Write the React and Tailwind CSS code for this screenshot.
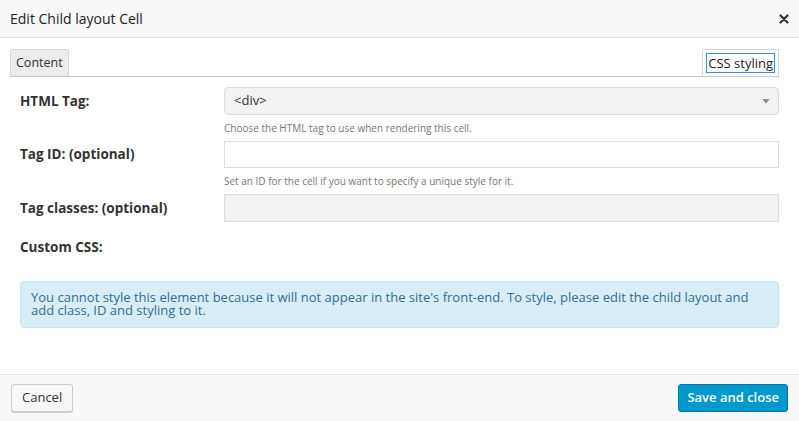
import React from "react";

function Row({ label, children }) {
  return (
    <div className="flex">
      <div className="w-[214px] shrink-0 pl-[10px] flex items-center text-[13.5px] font-bold text-[#333]">
        {label}
      </div>
      <div className="flex-1">{children}</div>
    </div>
  );
}

export default function App() {
  return (
    <div className="w-[799px] h-[421px] bg-white flex flex-col font-['Open_Sans',sans-serif] text-[#333] overflow-hidden">
      {/* dialog title bar */}
      <div className="h-[38px] shrink-0 bg-[#f8f8f8] border-b border-[#e5e5e5] flex items-center justify-between pl-[10px] pr-[10px]">
        <span className="text-[14px] text-[#222]">Edit Child layout Cell</span>
        <svg width="10" height="10" viewBox="0 0 10 10" className="mt-[1px]">
          <path d="M1.5 1.5 L8.5 8.5 M8.5 1.5 L1.5 8.5" stroke="#333" strokeWidth="2.2" strokeLinecap="round" />
        </svg>
      </div>

      <div className="flex-1 px-[10px] pt-[11px]">
        {/* tabs */}
        <div className="flex justify-between border-b border-[#c8c8c8] h-[28px] mr-[10px]">
          <div className="h-[27px] px-[5px] bg-[#ececec] border border-b-0 border-[#d6d6d6] rounded-t-[2px] text-[12.5px] flex items-center">
            Content
          </div>
          <div className="h-[27px] px-[3px] bg-white border border-b-0 border-[#d6d6d6] rounded-t-[2px] flex items-center">
            <span className="text-[13px] leading-[18px] px-[1px] border border-[#3b8fd6] text-[#222]">CSS styling</span>
          </div>
        </div>

        <div className="mr-[10px] mt-[10px] flex flex-col">
          <Row label="HTML Tag:">
            <div className="h-[28px] bg-[#f2f2f2] border border-[#dcdcdc] rounded-[4px] flex items-center justify-between pl-[9px] pr-[8px]">
              <span className="text-[13px] text-[#333]">&lt;div&gt;</span>
              <svg width="8" height="6" viewBox="0 0 8 6"><path d="M0.5 1 L7.5 1 L4 5.5 Z" fill="#8a8a8a" /></svg>
            </div>
          </Row>
          <div className="pl-[214px] text-[10px] text-[#777] mt-[6px] leading-[14px]">
            Choose the HTML tag to use when rendering this cell.
          </div>
          <div className="mt-[6px]">
            <Row label="Tag ID: (optional)">
              <div className="h-[27px] bg-white border border-[#ddd]" />
            </Row>
          </div>
          <div className="pl-[214px] text-[10px] text-[#777] mt-[6px] leading-[14px]">
            Set an ID for the cell if you want to specify a unique style for it.
          </div>
          <div className="mt-[6px]">
            <Row label="Tag classes: (optional)">
              <div className="h-[28px] bg-[#f2f2f2] border border-[#ddd]" />
            </Row>
          </div>
          <div className="pl-[10px] mt-[15px] text-[13.5px] font-bold text-[#333]">Custom CSS:</div>
          <div className="mt-[24px] ml-[10px] bg-[#d9edf7] border border-[#bce8f1] rounded-[4px] px-[10px] pt-[9px] pb-[10px] text-[13px] leading-[13px] text-[#31708f]">
            You cannot style this element because it will not appear in the site's front-end. To style, please edit the child layout and add class, ID and styling to it.
          </div>
        </div>
      </div>

      {/* dialog footer */}
      <div className="h-[47px] shrink-0 bg-[#f8f8f8] border-t border-[#e5e5e5] flex items-center justify-between pl-[11px] pr-[11px]">
        <button className="h-[28px] px-[10px] bg-[#f7f7f7] border border-[#ccc] rounded-[3px] text-[13px] text-[#333] shadow-[0_1px_0_#ccc]">
          Cancel
        </button>
        <button className="h-[28px] px-[8px] bg-[#0099cc] border border-[#0077a8] rounded-[3px] text-[13px] font-semibold text-white">
          Save and close
        </button>
      </div>
    </div>
  );
}
